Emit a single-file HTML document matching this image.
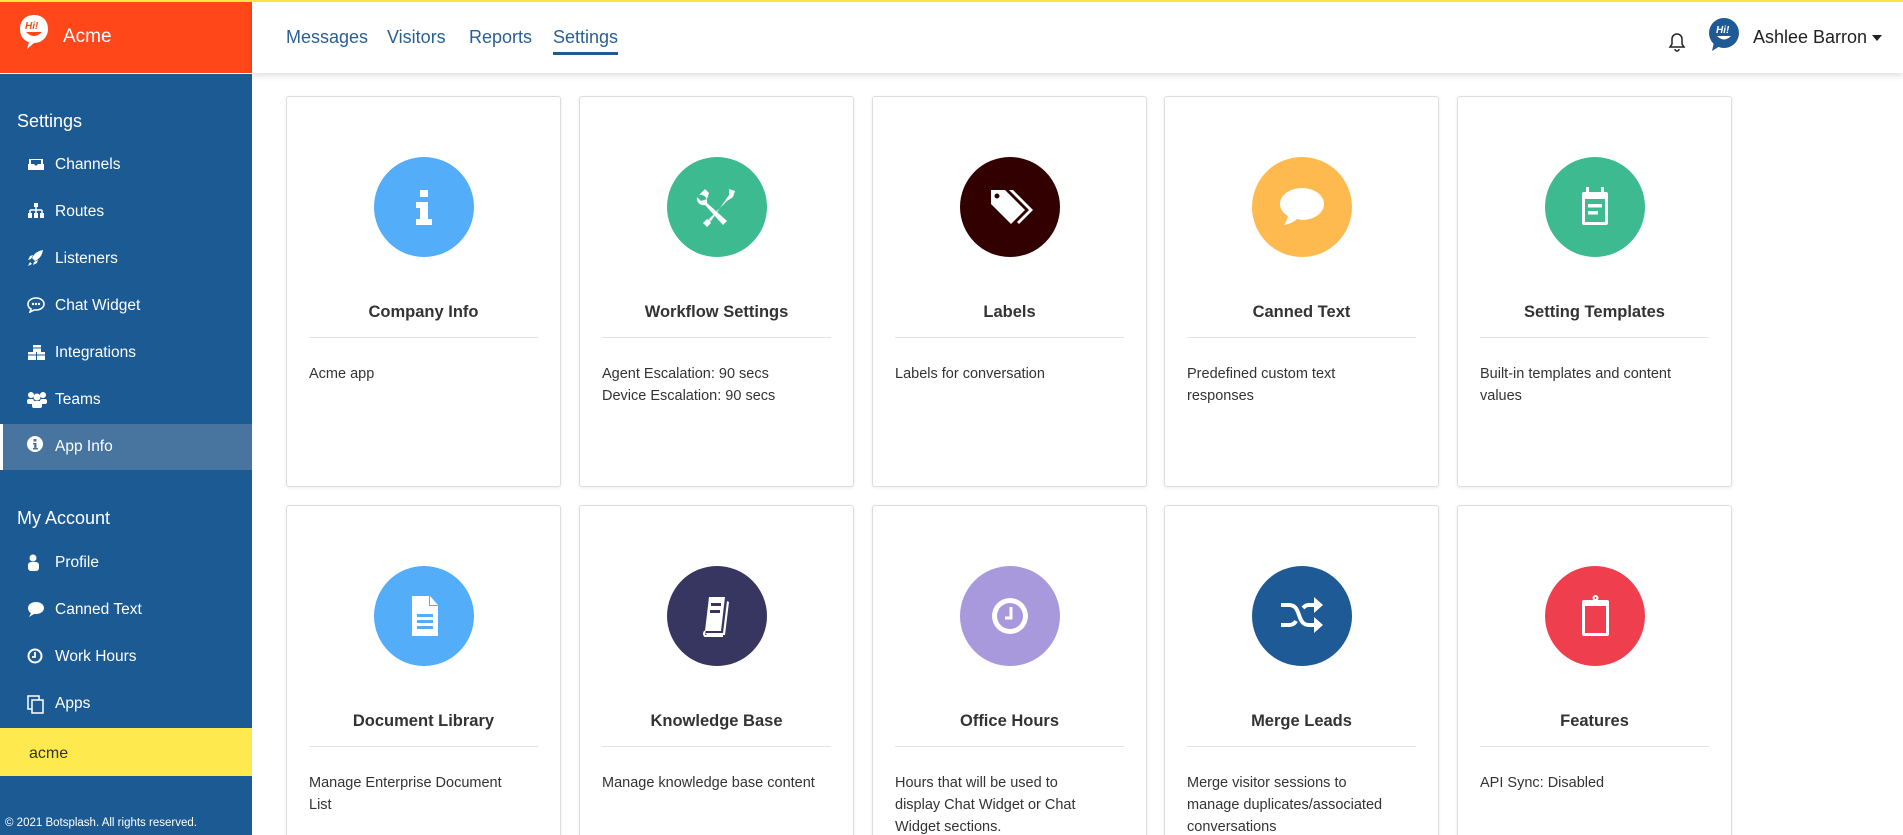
<!DOCTYPE html>
<html><head><meta charset="utf-8"><style>
*{box-sizing:border-box;margin:0;padding:0}
html,body{width:1903px;height:835px;overflow:hidden}
body{font-family:"Liberation Sans",sans-serif;background:#fff;position:relative}
.topline{position:absolute;left:0;top:0;width:1903px;height:2px;background:#f7e54a;z-index:5}
.brand{position:absolute;left:0;top:0;width:252px;height:73px;background:#ff4719;color:#fff}
.brand .t{position:absolute;left:63px;top:26px;font-size:19px}
.header{position:absolute;left:252px;top:0;right:0;height:73px;background:#fff;box-shadow:0 3px 6px rgba(0,0,0,.12);z-index:2}
.nav{position:absolute;top:27px;font-size:18px;color:#2a5f93}
.uline{position:absolute;top:52px;width:65px;height:3px;background:#1d5a96}
.side{position:absolute;left:0;top:73px;width:252px;height:762px;background:#1c5a94;color:#fff;border-top:1px solid #fff}
.sh{position:absolute;left:17px;font-size:18px}
.it{position:absolute;left:0;width:252px;height:46px;font-size:15.5px}
.it svg{position:absolute;left:27px;top:14px}
.it span{position:absolute;left:55px;top:14px}
.active{background:#4874a0;border-left:3px solid #fff}
.acme{position:absolute;left:0;top:654px;width:252px;height:48px;background:#fee94e;color:#333;font-size:16px;padding:17px 29px 0}
.foot{position:absolute;left:5px;top:743px;font-size:11.5px}
.card{position:absolute;width:275px;height:391px;border:1px solid #ddd;border-radius:3px;box-shadow:0 1px 3px rgba(0,0,0,.08);background:#fff}
.r2{height:340px}
.circ{position:absolute;left:87px;top:60px;width:100px;height:100px;border-radius:50%;display:flex;align-items:center;justify-content:center}
.ct{position:absolute;left:0;width:100%;top:206px;text-align:center;font-size:16.5px;font-weight:bold;color:#333}
.dv{position:absolute;left:22px;right:22px;top:240px;height:1px;background:#e3e3e3}
.ds{position:absolute;left:22px;top:266px;font-size:14.5px;line-height:22px;color:#333;white-space:nowrap}
</style></head><body>
<div class="topline"></div>
<div class="brand">
<svg style="position:absolute;left:18px;top:14px" width="32" height="36" viewBox="0 0 32 36"><path d="M16 1C7 1 2 7 2 15c0 7 4 12 9 13l-2 7 7-6c8 0 14-6 14-14S25 1 16 1z" fill="#fff"/><text x="7" y="15" font-size="10" font-weight="bold" font-style="italic" fill="#ff4719" font-family="Liberation Sans">Hi!</text><path d="M8 18q8 8 16 0z" fill="#ff4719"/></svg>
<div class="t">Acme</div></div>
<div class="header">
<div class="nav" style="left:34px">Messages</div>
<div class="nav" style="left:135px">Visitors</div>
<div class="nav" style="left:217px">Reports</div>
<div class="nav" style="left:301px">Settings</div>
<div class="uline" style="left:301px"></div>
<svg style="position:absolute;left:1416px;top:32px" width="18" height="20" viewBox="0 0 18 20"><path d="M9 2a5 5 0 0 0-5 5v5l-2 3h14l-2-3V7a5 5 0 0 0-5-5zM7 17a2 2 0 0 0 4 0" fill="none" stroke="#222" stroke-width="1.5"/></svg>
<svg style="position:absolute;left:1456px;top:18px" width="32" height="34" viewBox="0 0 32 34"><circle cx="16" cy="15" r="15" fill="#1d5a96"/><path d="M6 24l-2 9 8-5z" fill="#1d5a96"/><text x="8" y="15" font-size="10" font-weight="bold" font-style="italic" fill="#fff" font-family="Liberation Sans">Hi!</text><path d="M9 18q7 7 14 0z" fill="#fff"/></svg>
<div style="position:absolute;left:1501px;top:27px;font-size:18px;color:#222">Ashlee Barron</div>
<div style="position:absolute;left:1620px;top:35px;border:5px solid transparent;border-top:6px solid #222"></div>
</div>
<div class="side">
<div class="sh" style="top:37px">Settings</div>
<div class="it" style="top:68px"><svg width="18" height="16"><path d="M2 8V3h14v5" fill="#fff"/><rect x="1" y="8" width="16" height="6" fill="#fff"/><path d="M4 4h10v4h-3l-2 2-2-2H4z" fill="#1c5a94"/></svg><span>Channels</span></div>
<div class="it" style="top:115px"><svg width="18" height="16"><rect x="7" y="0" width="4" height="4" fill="#fff"/><path d="M9 4v3M3 7h12M3 7v3M9 7v3M15 7v3" stroke="#fff" stroke-width="1.5"/><rect x="1" y="10" width="4" height="5" fill="#fff"/><rect x="7" y="10" width="4" height="5" fill="#fff"/><rect x="13" y="10" width="4" height="5" fill="#fff"/></svg><span>Routes</span></div>
<div class="it" style="top:162px"><svg width="18" height="16"><path d="M16 0C10 1 7 4 5 8l3 3c4-2 7-5 8-11zM4 9l-3 1 2-4 3-1zM7 12l-1 3 4-2 1-3zM3 12l-2 4 4-2z" fill="#fff"/></svg><span>Listeners</span></div>
<div class="it" style="top:209px"><svg width="18" height="16"><path d="M9 1C4 1 1 4 1 7c0 2 1 4 3 5l-1 3 4-2h2c5 0 8-3 8-6S14 1 9 1z" fill="none" stroke="#fff" stroke-width="1.6"/><circle cx="6" cy="7" r="1.2" fill="#fff"/><circle cx="9" cy="7" r="1.2" fill="#fff"/><circle cx="12" cy="7" r="1.2" fill="#fff"/></svg><span>Chat Widget</span></div>
<div class="it" style="top:256px"><svg width="20" height="18"><rect x="6" y="1" width="8" height="7" fill="#fff"/><rect x="1" y="8" width="8" height="8" fill="#fff"/><rect x="10" y="8" width="8" height="8" fill="#fff"/><path d="M6 4h8M1 11h8M10 11h8" stroke="#1c5a94"/></svg><span>Integrations</span></div>
<div class="it" style="top:303px"><svg width="20" height="18"><circle cx="4" cy="4" r="3" fill="#fff"/><circle cx="16" cy="4" r="3" fill="#fff"/><circle cx="10" cy="6" r="3.5" fill="#fff"/><rect x="0" y="8" width="7" height="5" rx="2" fill="#fff"/><rect x="13" y="8" width="7" height="5" rx="2" fill="#fff"/><rect x="5" y="10" width="10" height="7" rx="2" fill="#fff"/></svg><span>Teams</span></div>
<div class="it active" style="top:350px"><svg width="18" height="18" style="left:24px;top:12px"><circle cx="8" cy="8" r="8" fill="#fff"/><rect x="6.5" y="3" width="3" height="2.5" fill="#4874a0"/><path d="M6 7h3.5v5H11v1.5H6V12h1.2V8.5H6z" fill="#4874a0"/></svg><span style="left:52px">App Info</span></div>
<div class="sh" style="top:434px">My Account</div>
<div class="it" style="top:466px"><svg width="18" height="18"><circle cx="6" cy="4" r="3.5" fill="#fff"/><rect x="1" y="8" width="11" height="9" rx="3" fill="#fff"/></svg><span>Profile</span></div>
<div class="it" style="top:513px"><svg width="18" height="18"><path d="M9 1C4 1 1 4 1 7c0 2 1 4 3 5l-2 4 5-3h2c5 0 8-3 8-6S14 1 9 1z" fill="#fff"/></svg><span>Canned Text</span></div>
<div class="it" style="top:560px"><svg width="18" height="18"><circle cx="8" cy="8" r="6.5" fill="none" stroke="#fff" stroke-width="2"/><path d="M8 4v5H5" stroke="#fff" stroke-width="1.8" fill="none"/></svg><span>Work Hours</span></div>
<div class="it" style="top:607px"><svg width="18" height="20"><rect x="1" y="1" width="11" height="13" fill="none" stroke="#fff" stroke-width="1.5"/><rect x="5" y="5" width="11" height="13" fill="#1c5a94" stroke="#fff" stroke-width="1.5"/></svg><span>Apps</span></div>
<div class="acme">acme</div>
<div class="foot">© 2021 Botsplash. All rights reserved.</div>
</div>

<!-- Row 1 -->
<div class="card" style="left:286px;top:96px"><div class="circ" style="background:#54adf8"><svg width="40" height="50" viewBox="0 0 40 50"><rect x="16" y="8" width="8" height="7" fill="#fff"/><path d="M12 20h12v17h4v6H12v-6h4V26h-4z" fill="#fff"/></svg></div><div class="ct">Company Info</div><div class="dv"></div><div class="ds">Acme app</div></div>
<div class="card" style="left:579px;top:96px"><div class="circ" style="background:#3dba8f"><svg width="44" height="44" viewBox="0 0 44 44"><path d="M10 4l4 4-2 6-6 2-4-4c-1 5 3 9 8 8l18 20 4-4-20-18c1-5-3-9-8-8z" fill="#fff"/><path d="M34 4l6 2-2 6-6 4-18 18 2 4-4 4-4-4 4-4 4 2L34 10z" fill="#fff"/></svg></div><div class="ct">Workflow Settings</div><div class="dv"></div><div class="ds">Agent Escalation: 90 secs<br>Device Escalation: 90 secs</div></div>
<div class="card" style="left:872px;top:96px"><div class="circ" style="background:#330000"><svg width="50" height="46" viewBox="0 0 50 46"><path d="M6 6h14l20 20-14 14L6 20z" fill="#fff"/><circle cx="12" cy="12" r="2.5" fill="#330000"/><path d="M24 6h4l20 20-14 14-2-2 12-12z" fill="#fff"/></svg></div><div class="ct">Labels</div><div class="dv"></div><div class="ds">Labels for conversation</div></div>
<div class="card" style="left:1164px;top:96px"><div class="circ" style="background:#ffba4f"><svg width="54" height="46" viewBox="0 0 54 46"><path d="M27 4C15 4 5 11 5 20c0 5 3 9 8 12-1 4-3 8-4 9 5-1 10-3 13-6 2 0 3 1 5 1 12 0 22-7 22-16S39 4 27 4z" fill="#fff"/></svg></div><div class="ct">Canned Text</div><div class="dv"></div><div class="ds">Predefined custom text<br>responses</div></div>
<div class="card" style="left:1457px;top:96px"><div class="circ" style="background:#3dba8f"><svg width="40" height="50" viewBox="0 0 40 50"><rect x="7" y="10" width="26" height="33" rx="2" fill="#fff"/><rect x="11" y="5" width="3" height="6" fill="#fff"/><rect x="26" y="5" width="3" height="6" fill="#fff"/><rect x="10" y="17" width="20" height="23" fill="#3dba8f"/><rect x="13" y="22" width="14" height="3.5" fill="#fff"/><rect x="13" y="29" width="10" height="3.5" fill="#fff"/></svg></div><div class="ct">Setting Templates</div><div class="dv"></div><div class="ds">Built-in templates and content<br>values</div></div>

<!-- Row 2 -->
<div class="card r2" style="left:286px;top:505px"><div class="circ" style="background:#54adf8"><svg width="40" height="56" viewBox="0 0 40 56"><path d="M8 8h17l9 10v30H8z" fill="#fff"/><path d="M25 8v10h9" fill="#54adf8"/><path d="M26 8l8 9h-8z" fill="#fff"/><rect x="13" y="26" width="16" height="3" fill="#54adf8"/><rect x="13" y="32" width="16" height="3" fill="#54adf8"/><rect x="13" y="38" width="16" height="3" fill="#54adf8"/></svg></div><div class="ct">Document Library</div><div class="dv"></div><div class="ds">Manage Enterprise Document<br>List</div></div>
<div class="card r2" style="left:579px;top:505px"><div class="circ" style="background:#363660"><svg width="44" height="50" viewBox="0 0 44 50"><path d="M14 6h16l-4 34H10z" fill="#fff"/><path d="M32 10l2 1-4 33H12l-2-2h18z" fill="#fff"/><path d="M10 40q-2 3 0 5h18" stroke="#fff" stroke-width="2" fill="none"/><rect x="16" y="12" width="10" height="3" fill="#363660"/><rect x="15" y="19" width="10" height="3" fill="#363660"/></svg></div><div class="ct">Knowledge Base</div><div class="dv"></div><div class="ds">Manage knowledge base content</div></div>
<div class="card r2" style="left:872px;top:505px"><div class="circ" style="background:#a899dd"><svg width="44" height="44" viewBox="0 0 44 44"><circle cx="22" cy="22" r="18" fill="#fff"/><circle cx="22" cy="22" r="13" fill="#a899dd"/><path d="M23 13v11h-6" stroke="#fff" stroke-width="3" fill="none"/></svg></div><div class="ct">Office Hours</div><div class="dv"></div><div class="ds">Hours that will be used to<br>display Chat Widget or Chat<br>Widget sections.</div></div>
<div class="card r2" style="left:1164px;top:505px"><div class="circ" style="background:#1d5a96"><svg width="50" height="46" viewBox="0 0 50 46"><path d="M4 12h8c6 0 8 4 10 10s4 10 10 10h6" stroke="#fff" stroke-width="4" fill="none"/><path d="M4 32h8c4 0 6-2 7-4M26 15c2-2 3-3 6-3h6" stroke="#fff" stroke-width="4" fill="none"/><path d="M37 4l9 8-9 8zM37 24l9 8-9 8z" fill="#fff"/></svg></div><div class="ct">Merge Leads</div><div class="dv"></div><div class="ds">Merge visitor sessions to<br>manage duplicates/associated<br>conversations</div></div>
<div class="card r2" style="left:1457px;top:505px"><div class="circ" style="background:#ef3f4f"><svg width="40" height="50" viewBox="0 0 40 50"><rect x="7" y="9" width="27" height="36" rx="2" fill="#fff"/><rect x="10" y="15" width="21" height="27" fill="#ef3f4f"/><rect x="15" y="9" width="11" height="6" fill="#fff"/><circle cx="20.5" cy="7" r="3" fill="#fff"/><circle cx="20.5" cy="7" r="1" fill="#ef3f4f"/></svg></div><div class="ct">Features</div><div class="dv"></div><div class="ds">API Sync: Disabled</div></div>
</body></html>
